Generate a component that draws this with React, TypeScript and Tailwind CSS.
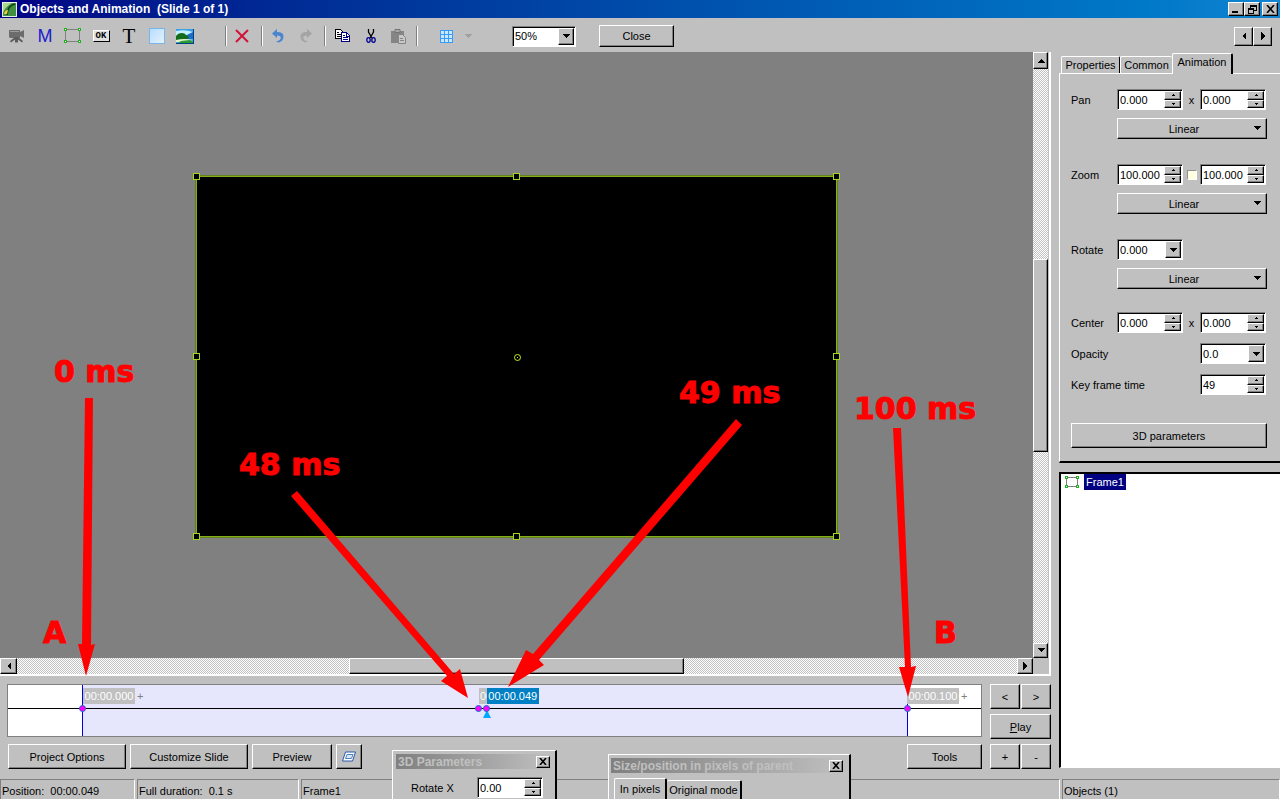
import { ReactNode } from "react";
import clsx from "clsx";

const raised =
  "border border-t-white border-l-white border-r-black border-b-black bg-[#c0c0c0] shadow-[inset_-1px_-1px_0_#808080]";
const sunken =
  "border border-t-[#808080] border-l-[#808080] border-r-white border-b-white bg-white shadow-[inset_1px_1px_0_#000]";
const track =
  "bg-[repeating-conic-gradient(#fff_0_25%,#c0c0c0_0_50%)] bg-[length:2px_2px]";

type Direction = "up" | "down" | "left" | "right";

const arrowPaths: Record<Direction, string> = {
  up: "M0 6h8L4 2z",
  down: "M0 2h8L4 6z",
  left: "M6 0v8L2 4z",
  right: "M2 0v8l4-4z",
};

function Arrow({ dir, size = 8 }: { dir: Direction; size?: number }) {
  return (
    <svg width={size} height={size} viewBox="0 0 8 8" shapeRendering="crispEdges" aria-hidden="true">
      <path d={arrowPaths[dir]} />
    </svg>
  );
}

function PushButton({
  children,
  label,
  className,
}: {
  children: ReactNode;
  label?: string;
  className?: string;
}) {
  return (
    <button
      type="button"
      aria-label={label}
      className={clsx("flex shrink-0 items-center justify-center", raised, className)}
    >
      {children}
    </button>
  );
}

function SpinBox({ label, value }: { label: string; value: string }) {
  return (
    <div className={clsx("flex h-[21px] w-[66px] p-px", sunken)}>
      <input aria-label={label} defaultValue={value} className="w-0 flex-1 bg-transparent pl-px outline-none" />
      <div className="flex w-[17px] flex-col">
        <PushButton label={label + " up"} className="flex-1">
          <Arrow dir="up" size={4} />
        </PushButton>
        <PushButton label={label + " down"} className="flex-1">
          <Arrow dir="down" size={4} />
        </PushButton>
      </div>
    </div>
  );
}

function ComboBox({ label, value, className }: { label: string; value: string; className?: string }) {
  return (
    <div className={clsx("relative flex h-[21px] p-px", sunken, className)}>
      <select aria-label={label} className="w-full appearance-none bg-transparent pl-px outline-none">
        <option>{value}</option>
      </select>
      <span
        className={clsx(
          "pointer-events-none absolute inset-y-px right-px flex w-4 items-center justify-center",
          raised
        )}
      >
        <Arrow dir="down" />
      </span>
    </div>
  );
}

function EasingSelect({ label }: { label: string }) {
  return (
    <div className="relative mt-2 ml-[46px] w-[150px]">
      <select
        aria-label={label}
        className={clsx("h-[21px] w-full appearance-none pr-4 outline-none [text-align-last:center]", raised)}
      >
        <option>Linear</option>
      </select>
      <span className="pointer-events-none absolute top-[6px] right-[6px]">
        <Arrow dir="down" />
      </span>
    </div>
  );
}

function ToolButton({ label, children, className }: { label: string; children: ReactNode; className?: string }) {
  return (
    <button
      type="button"
      aria-label={label}
      className={clsx("flex h-6 w-7 shrink-0 items-center justify-center", className)}
    >
      {children}
    </button>
  );
}

function Separator({ className }: { className?: string }) {
  return <span className={clsx("h-5 w-[2px] shrink-0 border-r border-l border-l-[#808080] border-r-white", className)} />;
}

function FrameIcon({ width = 18, height = 16 }: { width?: number; height?: number }) {
  const r = width - 4;
  const b = height - 4;
  return (
    <svg width={width} height={height} fill="none" shapeRendering="crispEdges" aria-hidden="true">
      <rect x="1.500" y="1.500" width={r} height={b} stroke="#808080" />
      <g stroke="#22b022" fill="#e8ffe8">
        <rect x=".5" y=".5" width="2" height="2" />
        <rect x={r + 0.5} y=".5" width="2" height="2" />
        <rect x=".5" y={b + 0.5} width="2" height="2" />
        <rect x={r + 0.5} y={b + 0.5} width="2" height="2" />
      </g>
    </svg>
  );
}

function CameraIcon() {
  return (
    <svg width="18" height="16" viewBox="0 0 18 16" aria-hidden="true">
      <path d="M1 2h11v2l4-2v8l-4-2v2H2L1 9z" fill="#6c6c6c" />
      <path d="M7 9h3l5 4-1 1.500-4-3v3H7v-3l-4 3L2 13z" fill="#5c5c5c" />
      <path d="M2 3h9v1H2z" fill="#999" />
    </svg>
  );
}

function PictureIcon() {
  return (
    <svg width="18" height="15" viewBox="0 0 18 15" aria-hidden="true">
      <path fill="#3aa0e8" d="M0 0h18v15H0z" />
      <path fill="#c4f0fc" d="M0 2q9-2 17 1L9 7H0z" />
      <path fill="#1c6fc4" d="M9 7l8-4v7H9z" />
      <path fill="#146b1c" d="M0 7q2-3 6-3 3 0 4 2 3 1 3 3l-5 2H0z" />
      <path fill="#e4f4c8" d="M0 11q8-2 17 0l-9 2H0z" />
      <path fill="#2a9a35" d="M5 12l9-1 3 2v1H2z" />
      <path fill="#063f86" d="M0 14h18v1H0zM17 0h1v15h-1z" />
    </svg>
  );
}

function TurnIcon({ flip, color }: { flip?: boolean; color: string }) {
  return (
    <svg width="14" height="16" viewBox="0 0 14 16" className={flip ? "-scale-x-100" : ""} aria-hidden="true">
      <path d="M1 5.500L6 1v3q7 0 6.500 5Q12.200 13 8 14.500l-3-.8q5-1.700 4.800-4Q9.500 7.500 6 7.500V10z" fill={color} />
    </svg>
  );
}

function CopyIcon() {
  return (
    <svg width="16" height="14" viewBox="0 0 16 14" fill="#fff" shapeRendering="crispEdges" aria-hidden="true">
      <path d="M.5.500h5l3 3v6h-8z" stroke="#000" />
      <path d="M2 3h2M2 5h4M2 7h4" transform="translate(0 .5)" stroke="#000" />
      <path d="M6.500 3.500h5l3 3v6h-8z" stroke="#000080" />
      <path d="M11.500 3.500v3h3M8 6h2M8 8h5M8 10h5" transform="translate(0 .5)" stroke="#000080" />
    </svg>
  );
}

function CutIcon() {
  return (
    <svg width="10" height="15" viewBox="0 0 10 15" fill="none" aria-hidden="true">
      <path d="M2.500 0v3l3.500 6M7.500 0v3L4 9" stroke="#000" strokeWidth="1.300" />
      <ellipse cx="2.500" cy="11" rx="1.700" ry="2.300" stroke="#000090" strokeWidth="1.300" />
      <ellipse cx="7.500" cy="11" rx="1.700" ry="2.300" stroke="#000090" strokeWidth="1.300" />
    </svg>
  );
}

function PasteIcon() {
  return (
    <svg width="17" height="15" viewBox="0 0 17 15" aria-hidden="true">
      <path d="M1 2h13v12H1z" fill="#858585" />
      <path d="M5 .5h5v3H5z" fill="#a8a8a8" stroke="#757575" />
      <path d="M8.500 5.500h4l3 3v6h-7z" fill="#c8c8c8" stroke="#858585" />
      <path d="M10 9.500h3M10 11.500h4" stroke="#858585" />
    </svg>
  );
}

function TitleBar() {
  return (
    <header className="flex h-[18px] shrink-0 items-center bg-linear-to-r from-[#000084] to-[#1084d0] px-[2px] text-white">
      <svg width="15" height="15" viewBox="0 0 15 15" aria-hidden="true">
        <path fill="#e8f0e0" d="M0 0h15v15H0z" />
        <path fill="#3f9040" d="M1 1h13v13H1z" />
        <path fill="#a8d890" d="M1 1h9Q3 5 1 11z" />
        <path d="M13 2Q6 3 5 13" stroke="#173a18" strokeWidth="1.500" fill="none" />
        <path d="M2 12q1-4 4-4l-1 4z" fill="#f0d040" />
      </svg>
      <h1 className="ml-[3px] flex-1 text-[12px] font-bold whitespace-pre">{"Objects and Animation  (Slide 1 of 1)"}</h1>
      <PushButton label="Minimize" className="h-[14px] w-4">
        <svg width="8" height="8" aria-hidden="true"><path d="M0 6h6v2H0z" /></svg>
      </PushButton>
      <PushButton label="Restore" className="h-[14px] w-4">
        <svg width="9" height="9" fill="none" stroke="#000" shapeRendering="crispEdges" aria-hidden="true">
          <path d="M2.500 3V.5h6v5H6M2 1.500h7M.5 3.500h5v5h-5zM0 4.500h6" />
        </svg>
      </PushButton>
      <PushButton label="Close window" className="ml-[2px] h-[14px] w-4">
        <svg width="9" height="8" stroke="#000" strokeWidth="1.600" aria-hidden="true"><path d="M1 0l7 8M8 0L1 8" /></svg>
      </PushButton>
    </header>
  );
}

function Toolbar() {
  return (
    <div role="toolbar" className="flex h-[34px] shrink-0 items-center pt-[2px] pr-2 pl-[3px]">
      <ToolButton label="Camera"><CameraIcon /></ToolButton>
      <ToolButton label="Mask" className="text-[18px] text-[#2020d0]">M</ToolButton>
      <ToolButton label="Frame"><FrameIcon /></ToolButton>
      <ToolButton label="Button">
        <span className="flex h-3 w-[17px] items-center justify-center border border-t-white border-l-white border-r-black border-b-black bg-[#e0e0e0] font-['Liberation_Mono'] text-[9px] font-bold">
          OK
        </span>
      </ToolButton>
      <ToolButton label="Text" className="font-['Liberation_Serif'] text-[21px]">T</ToolButton>
      <ToolButton label="Rectangle">
        <span className="size-4 border border-[#78b4ee] bg-linear-to-br from-[#b8dcfc] to-[#e4f2ff]" />
      </ToolButton>
      <ToolButton label="Picture"><PictureIcon /></ToolButton>
      <Separator className="ml-[26px]" />
      <ToolButton label="Delete" className="ml-px">
        <svg width="14" height="14" stroke="#d01438" strokeWidth="2" aria-hidden="true">
          <path d="M1 1l12 12M13 1L1 13" />
        </svg>
      </ToolButton>
      <Separator className="ml-[5px]" />
      <ToolButton label="Undo" className="ml-px"><TurnIcon color="#4a86d0" /></ToolButton>
      <ToolButton label="Redo"><TurnIcon color="#a4a4a4" flip /></ToolButton>
      <Separator className="ml-1" />
      <ToolButton label="Copy" className="ml-[3px]"><CopyIcon /></ToolButton>
      <ToolButton label="Cut"><CutIcon /></ToolButton>
      <ToolButton label="Paste" className="-ml-px"><PasteIcon /></ToolButton>
      <Separator className="ml-1" />
      <ToolButton label="Grid" className="ml-[14px]">
        <svg width="13" height="13" fill="#c8e8ff" stroke="#3a9af8" shapeRendering="crispEdges" aria-hidden="true">
          <path d="M.5.500h12v12H.5zM4.500 0v13M8.500 0v13M0 4.500h13M0 8.500h13" />
        </svg>
      </ToolButton>
      <button type="button" aria-label="Grid options" className="w-4 fill-[#a0a0a0] pl-1">
        <Arrow dir="down" />
      </button>
      <ComboBox label="Zoom level" value="50%" className="ml-9 w-16" />
      <PushButton className="ml-[23px] h-[22px] w-[75px]">Close</PushButton>
      <div className="ml-auto flex">
        <PushButton label="Previous slide" className="h-[19px] w-[19px]"><Arrow dir="left" /></PushButton>
        <PushButton label="Next slide" className="h-[19px] w-[19px]"><Arrow dir="right" /></PushButton>
      </div>
    </div>
  );
}

const handles = [
  "-top-[4px] -left-[4px]",
  "-top-[4px] left-[316px]",
  "-top-[4px] -right-[4px]",
  "top-[176px] -left-[4px]",
  "top-[176px] -right-[4px]",
  "-bottom-[4px] -left-[4px]",
  "-bottom-[4px] left-[316px]",
  "-bottom-[4px] -right-[4px]",
];

function Workspace() {
  return (
    <div className="flex min-h-0 flex-1 flex-col border-r-2 border-b-2 border-white">
      <div className="flex flex-1 pr-px">
        <div className="flex flex-1 items-center justify-center bg-[#808080] pt-[3px]">
          <div className="relative h-[361px] w-[641px] border border-[#84ad1c] bg-black shadow-[0_0_0_1px_#62801c]">
            {handles.map((pos) => (
              <span key={pos} className={clsx("absolute size-[7px] border border-[#a4d820] bg-black", pos)} />
            ))}
            <svg className="absolute top-[177px] left-[317px]" width="7" height="7" fill="none" aria-hidden="true">
              <circle cx="3.500" cy="3.500" r="3" stroke="#c0f020" />
              <path d="M3 3h1v1H3z" fill="#c0f020" />
            </svg>
          </div>
        </div>
        <div className={clsx("flex w-[15px] flex-col", track)}>
          <PushButton label="Scroll up" className="h-[17px]"><Arrow dir="up" /></PushButton>
          <div className="flex-[191]" />
          <div className={clsx("flex-[191]", raised)} />
          <div className="flex-[192]" />
          <PushButton label="Scroll down" className="h-[15px]"><Arrow dir="down" /></PushButton>
        </div>
      </div>
      <div className="flex h-4 bg-[#c0c0c0] pr-4">
        <div className={clsx("flex flex-1", track)}>
          <PushButton label="Scroll left" className="w-[17px]"><Arrow dir="left" /></PushButton>
          <div className="flex-[333]" />
          <div className={clsx("flex-[333]", raised)} />
          <div className="flex-[334]" />
          <PushButton label="Scroll right" className="w-4"><Arrow dir="right" /></PushButton>
        </div>
      </div>
    </div>
  );
}

const keyframes = [
  { time: 0, label: "00:00.000" },
  { time: 48, label: "00:00.048" },
  { time: 49, label: "00:00.049" },
  { time: 100, label: "00:00.100" },
];

function Timeline() {
  return (
    <div className="relative flex h-[53px] border border-[#808080] bg-white">
      <div className="w-[74px]" />
      <div className="relative flex-1 border-x border-[#0000e0] bg-[#e6e6fd]">
        {keyframes.map(({ time, label }) => {
          const current = time === 49;
          return (
            <div key={time} className="absolute top-[3px]" style={{ left: time + "%" }}>
              <div className="flex items-center gap-[2px] text-[#808080]">
                <span
                  className={clsx(
                    "flex h-4 w-[52px] items-center justify-center text-white",
                    current ? "bg-[#0080c4]" : "bg-[#c0c0c0]"
                  )}
                >
                  {label}
                </span>
                {(time === 0 || time === 100) && <span>+</span>}
              </div>
            </div>
          );
        })}
      </div>
      <div className="w-[73px]" />
      <div className="absolute inset-x-0 top-[23px] h-px bg-black" />
      <div className="absolute inset-x-[74px] top-[20px]">
        {keyframes.map(({ time }) => (
          <svg
            key={time}
            className="absolute -ml-[3px]"
            style={{ left: time + "%" }}
            width="9"
            height="14"
            aria-hidden="true"
          >
            {time === 49 && <path d="M4 5l4 8H0z" fill="#00a8ff" />}
            <circle cx="3.500" cy="3.500" r="3" fill="#f0f" stroke="#1870c8" />
          </svg>
        ))}
      </div>
    </div>
  );
}

const notes = [
  { text: "0 ms", pos: "top-[301px] left-[54px]" },
  { text: "48 ms", pos: "top-[394px] left-[239px]" },
  { text: "49 ms", pos: "top-[322px] left-[679px]" },
  { text: "100 ms", pos: "top-[338px] left-[854px]" },
  { text: "A", pos: "top-[562px] left-[43px]" },
  { text: "B", pos: "top-[562px] left-[934px]" },
];

function Annotations() {
  return (
    <div className="pointer-events-none absolute inset-0 text-[#f00]">
      <svg className="absolute inset-0 size-full" fill="#f00" aria-hidden="true">
        <path d="M85 346h8l-2 247 4-1-9 32-8-32h4z" />
        <path d="M291 444l6-5 157 183 6-5 8 29-27-17 6-5z" />
        <path d="M736 367l6 6-203 235 5 5-36 22 18-37 7 4z" />
        <path d="M893 376h8l10 239 5-1-8 31-9-30h6z" />
      </svg>
      {notes.map(({ text, pos }) => (
        <span
          key={text}
          className={clsx(
            "absolute font-['DejaVu_Sans'] text-[30px] leading-[38px] font-bold whitespace-nowrap [-webkit-text-stroke:1px_#f00]",
            pos
          )}
        >
          {text}
        </span>
      ))}
    </div>
  );
}

function Row({ label, children }: { label: string; children: ReactNode }) {
  return (
    <div className="grid grid-cols-[46px_66px_17px_66px] items-center">
      <span className="whitespace-nowrap">{label}</span>
      {children}
    </div>
  );
}

function Sidebar() {
  return (
    <aside className="flex w-[221px] shrink-0 flex-col pb-px">
      <div role="tablist" className="flex h-[21px] items-end pl-[2px]">
        <button role="tab" className="h-[17px] w-[59px] rounded-t-[2px] border-t border-r border-l border-white border-r-black">
          Properties
        </button>
        <button role="tab" className="h-[17px] w-[52px] rounded-t-[2px] border-t border-l border-white">
          Common
        </button>
        <button
          role="tab"
          aria-selected="true"
          className="relative z-10 -mb-px h-[21px] w-[61px] rounded-t-[2px] border-t border-r-2 border-l border-white border-r-black bg-[#c0c0c0] pb-1"
        >
          Animation
        </button>
      </div>
      <div className="flex h-[390px] flex-col border-t border-b-2 border-l border-white border-b-black pt-[15px] pr-3 pl-[11px]">
        <Row label="Pan">
          <SpinBox label="Pan X" value="0.000" />
          <span className="text-center">x</span>
          <SpinBox label="Pan Y" value="0.000" />
        </Row>
        <EasingSelect label="Pan easing" />
        <div className="h-[25px]" />
        <Row label="Zoom">
          <SpinBox label="Zoom X" value="100.000" />
          <input
            type="checkbox"
            aria-label="Keep proportions"
            className="size-[10px] appearance-none justify-self-center border border-t-[#909090] border-l-[#909090] border-r-white border-b-white bg-[#ffffe1]"
          />
          <SpinBox label="Zoom Y" value="100.000" />
        </Row>
        <EasingSelect label="Zoom easing" />
        <div className="h-[25px]" />
        <Row label="Rotate">
          <ComboBox label="Rotate" value="0.000" />
        </Row>
        <EasingSelect label="Rotate easing" />
        <div className="mt-[23px] flex flex-col gap-[10px]">
          <Row label="Center">
            <SpinBox label="Center X" value="0.000" />
            <span className="text-center">x</span>
            <SpinBox label="Center Y" value="0.000" />
          </Row>
          <div className="flex w-[195px] items-center justify-between">
            <span>Opacity</span>
            <ComboBox label="Opacity" value="0.0" className="w-[66px]" />
          </div>
          <div className="flex w-[195px] items-center justify-between">
            <span>Key frame time</span>
            <SpinBox label="Key frame time" value="49" />
          </div>
        </div>
        <PushButton className="mt-7 h-[25px] w-[196px]">3D parameters</PushButton>
      </div>
      <ul className="mt-[9px] flex-1 border-t-2 border-l-2 border-b border-t-black border-l-black border-b-white bg-white">
        <li className="flex items-center gap-1 pl-1">
          <FrameIcon width={15} height={13} />
          <span className="flex h-4 items-center bg-[#000080] px-[2px] text-white">Frame1</span>
        </li>
      </ul>
    </aside>
  );
}

function CloseBox({ label }: { label: string }) {
  return (
    <PushButton label={label} className="h-3 w-[14px]">
      <svg width="8" height="7" stroke="#000" strokeWidth="1.600" aria-hidden="true"><path d="M1 0l6 7M7 0L1 7" /></svg>
    </PushButton>
  );
}

function Panels() {
  return (
    <>
      <section className="absolute bottom-0 left-[392px] h-[49px] w-[165px] overflow-hidden border-t border-r-2 border-l border-white border-r-black bg-[#c0c0c0] px-[3px] pt-[3px]">
        <div className="flex h-[15px] items-center justify-between bg-linear-to-r from-[#808080] to-[#c0c0c0] px-[2px] text-[12px] font-bold text-[#c0c0c0]">
          3D Parameters
          <CloseBox label="Close 3D Parameters" />
        </div>
        <div className="mt-2 flex items-center pl-[15px]">
          <span className="w-[66px]">Rotate X</span>
          <SpinBox label="Rotate X" value="0.00" />
        </div>
      </section>
      <section className="absolute bottom-0 left-[608px] h-[45px] w-[243px] overflow-hidden border-t border-r-2 border-l border-white border-r-black bg-[#c0c0c0] px-[2px] pt-[3px]">
        <div className="flex h-[15px] items-center justify-between bg-linear-to-r from-[#808080] to-[#c0c0c0] px-[2px] pr-1 text-[12px] font-bold text-[#c0c0c0]">
          Size/position in pixels of parent
          <CloseBox label="Close size and position" />
        </div>
        <div role="tablist" className="mt-[5px] flex items-end pl-[3px]">
          <button role="tab" aria-selected="true" className="h-[21px] w-[53px] rounded-t-[2px] border-t border-r-2 border-l border-white border-r-black">
            In pixels
          </button>
          <button role="tab" className="h-[19px] w-[75px] rounded-t-[2px] border-t border-r-2 border-white border-r-black whitespace-nowrap">
            Original mode
          </button>
        </div>
      </section>
    </>
  );
}

const statusCell = "border-t border-r border-l border-t-[#808080] border-l-[#808080] border-r-white pt-[3px] pl-px whitespace-pre";

export default function App() {
  return (
    <div
      className={clsx(
        "relative flex h-screen min-h-[640px] flex-col overflow-hidden border-b border-white bg-[#c0c0c0] text-[11px] leading-4 text-black",
        "font-['Liberation_Sans',Arial,sans-serif]"
      )}
    >
      <TitleBar />
      <Toolbar />
      <main className="relative flex min-h-0 flex-1 gap-2">
        <div className="flex min-w-0 flex-1 flex-col">
          <Workspace />
          <div className="flex gap-2 pt-2 pl-[7px]">
            <div className="flex flex-1 flex-col gap-[7px]">
              <Timeline />
              <div className="flex gap-1 pl-px">
                <PushButton className="h-[25px] w-[118px]">Project Options</PushButton>
                <PushButton className="h-[25px] w-[118px]">Customize Slide</PushButton>
                <PushButton className="h-[25px] w-20">Preview</PushButton>
                <PushButton label="Full screen" className="h-[25px] w-[26px]">
                  <svg width="14" height="11" viewBox="0 0 14 11" aria-hidden="true">
                    <path d="M3.500 1h10l-3 9H.5z" fill="#fff" stroke="#2458a8" />
                    <path d="M5 3.500h6l-1.500 4h-6z" fill="#d8e8f8" stroke="#5080c0" />
                  </svg>
                </PushButton>
                <PushButton className="ml-auto h-[25px] w-[75px]">Tools</PushButton>
              </div>
            </div>
            <div className="grid w-[61px] grid-cols-2 content-start gap-x-px gap-y-[5px]">
              <PushButton className="h-[25px]">&lt;</PushButton>
              <PushButton className="h-[25px]">&gt;</PushButton>
              <PushButton className="col-span-2 h-[25px]"><u>P</u>lay</PushButton>
              <PushButton className="h-[25px]">+</PushButton>
              <PushButton className="h-[25px]">-</PushButton>
            </div>
          </div>
        </div>
        <Sidebar />
        <Annotations />
      </main>
      <footer className="mt-[10px] flex h-5 shrink-0 gap-[2px]">
        <div className={clsx("w-[135px]", statusCell)}>{"Position:  00:00.049"}</div>
        <div className={clsx("w-[162px]", statusCell)}>{"Full duration:  0.1 s"}</div>
        <div className={clsx("flex-1", statusCell)}>Frame1</div>
        <div className={clsx("w-[218px]", statusCell)}>Objects (1)</div>
      </footer>
      <Panels />
    </div>
  );
}
